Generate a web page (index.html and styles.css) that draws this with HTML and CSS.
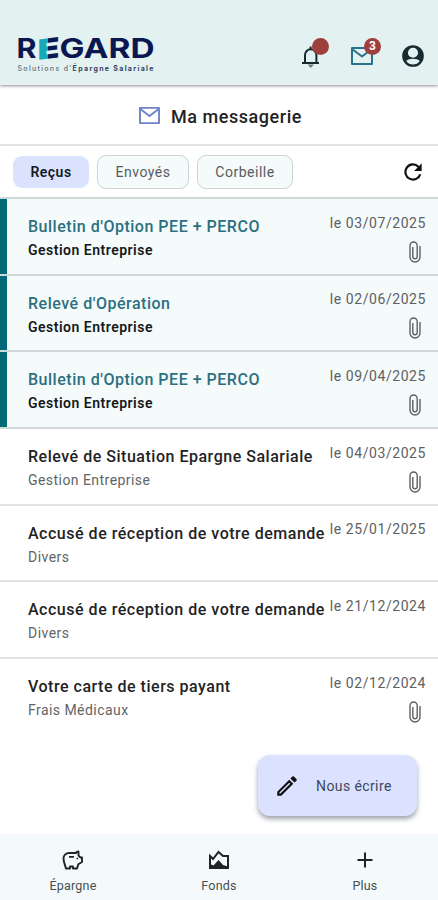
FILE: index.html
```html
<!DOCTYPE html>
<html lang="fr">
<head>
<meta charset="utf-8">
<title>Ma messagerie</title>
<link rel="stylesheet" href="styles.css">
</head>
<body>
<svg class="defs" width="0" height="0">
  <symbol id="mail-thin" viewBox="0 0 24 20"><path d="M2 2h20v16H2zM2 3l10 7.500L22 3" fill="none" stroke="currentColor" stroke-width="2" stroke-linejoin="round"/></symbol>
  <symbol id="clip" viewBox="0 0 12 22"><path d="M11 5v11a5 5 0 0 1-10 0V4.600a3.600 3.600 0 0 1 7.200 0v11a2.200 2.200 0 0 1-4.400 0V6" fill="none" stroke="currentColor" stroke-width="1.400"/></symbol>
</svg>
<div class="app">
  <header class="top">
    <svg class="logo" width="140" height="48" viewBox="0 -8 140 48">
      <defs><linearGradient id="flag"><stop offset="0.500" stop-color="#18a9b8"/><stop offset="0.500" stop-color="#0b1750"/></linearGradient></defs>
      <g class="brand">
        <text x="-0.500" y="22" textLength="20" lengthAdjust="spacingAndGlyphs">R</text>
        <text class="brand-e" transform="translate(20.500 24) skewY(-7)" x="0" y="0" textLength="22" lengthAdjust="spacingAndGlyphs" fill="url(#flag)">E</text>
        <text x="42.500" y="22" textLength="95" lengthAdjust="spacingAndGlyphs">GARD</text>
      </g>
      <text class="tagline" x="0.500" y="35" textLength="136">Solutions d’<tspan class="strong">Épargne Salariale</tspan></text>
    </svg>
    <div class="actions">
      <div class="action bell">
        <svg width="22" height="25" viewBox="0 0 22 25"><path d="M2 19h17M5 19V11a5.700 5.700 0 0 1 11.400 0v8M10.600 5V2.500" fill="none" stroke="#17282d" stroke-width="2"/><path d="M7.500 20.500h6.500l-3.200 3.500z" fill="#707b7d"/></svg>
        <span class="badge"></span>
      </div>
      <div class="action inbox">
        <svg width="24" height="20"><use href="#mail-thin"/></svg>
        <span class="badge">3</span>
      </div>
      <svg class="user" width="26" height="26" viewBox="0 0 24 24"><path fill-rule="evenodd" d="M12 2a10 10 0 1 0 0 20 10 10 0 0 0 0-20zm0 2.300a4.700 4.700 0 1 1 0 9.400 4.700 4.700 0 0 1 0-9.400zM5.800 16.500c2.200-2.500 10.200-2.500 12.400 0C15.500 20.900 8.500 20.900 5.800 16.500z"/></svg>
    </div>
  </header>
  <div class="heading"><svg width="23" height="19"><use href="#mail-thin"/></svg><h1>Ma messagerie</h1></div>
  <nav class="tabs">
    <span class="tab active">Reçus</span><span class="tab">Envoyés</span><span class="tab">Corbeille</span>
    <svg class="refresh" width="26" height="26" viewBox="0 0 24 24"><path d="M17.650 6.350A8 8 0 1 0 19.730 14h-2.080A6 6 0 1 1 12 6c1.660 0 3.140.69 4.220 1.780L13 11h7V4l-2.350 2.350z"/></svg>
  </nav>
  <main class="list">
    <article class="msg unread"><div class="text"><h2>Bulletin d'Option PEE + PERCO</h2><p>Gestion Entreprise</p></div><div class="meta"><time>le 03/07/2025</time><svg><use href="#clip"/></svg></div></article>
    <article class="msg unread"><div class="text"><h2>Relevé d'Opération</h2><p>Gestion Entreprise</p></div><div class="meta"><time>le 02/06/2025</time><svg><use href="#clip"/></svg></div></article>
    <article class="msg unread"><div class="text"><h2>Bulletin d'Option PEE + PERCO</h2><p>Gestion Entreprise</p></div><div class="meta"><time>le 09/04/2025</time><svg><use href="#clip"/></svg></div></article>
    <article class="msg"><div class="text"><h2>Relevé de Situation Epargne Salariale</h2><p>Gestion Entreprise</p></div><div class="meta"><time>le 04/03/2025</time><svg><use href="#clip"/></svg></div></article>
    <article class="msg"><div class="text"><h2>Accusé de réception de votre demande</h2><p>Divers</p></div><div class="meta"><time>le 25/01/2025</time></div></article>
    <article class="msg"><div class="text"><h2>Accusé de réception de votre demande</h2><p>Divers</p></div><div class="meta"><time>le 21/12/2024</time></div></article>
    <article class="msg"><div class="text"><h2>Votre carte de tiers payant</h2><p>Frais Médicaux</p></div><div class="meta"><time>le 02/12/2024</time><svg><use href="#clip"/></svg></div></article>
  </main>
  <button class="compose"><svg width="26" height="26" viewBox="0 0 24 24"><path d="M14.060 9.020l.92.92L5.920 19H5v-.92l9.060-9.060M17.660 3c-.25 0-.51.1-.7.290l-1.830 1.830 3.750 3.750 1.830-1.830a1 1 0 0 0 0-1.410l-2.340-2.340c-.2-.2-.45-.29-.71-.290zm-3.600 3.190L3 17.250V21h3.750L17.810 9.940l-3.750-3.750z"/></svg><span>Nous écrire</span></button>
  <footer class="bottom">
    <div class="item"><svg width="24" height="24" viewBox="0 0 24 24"><path d="M15 5H8.500A5.500 5.500 0 0 0 2.500 10.500C2.500 13.500 4 17 5 20.500H9v-2h3v2h4l1.300-4.200L21 14V9.500H19.500L17.500 7.500V3.500c-1 0-2.500.7-2.500 1.500z" fill="none" stroke="currentColor" stroke-width="1.900" stroke-linejoin="round"/><path d="M8 8h5v1.800H8zM15.500 9.700h1.600v1.600h-1.600z"/></svg><span>Épargne</span></div>
    <div class="item"><svg width="24" height="24" viewBox="0 0 24 24"><path d="M3 8l3 3 5.500-7L16 8h5v12H3z" fill="none" stroke="currentColor" stroke-width="2"/><path d="M3 16l3.500 1.500 5-5.500 4.500 5 5 1.500V20H3z"/></svg><span>Fonds</span></div>
    <div class="item"><svg width="24" height="24" viewBox="0 0 24 24"><path d="M19.500 13H13v6.500h-2V13H4.500v-2H11V4.500h2V11h6.500v2z"/></svg><span>Plus</span></div>
  </footer>
</div>
</body>
</html>
```
FILE: styles.css
```css
* { box-sizing: border-box; }
body { margin: 0; background: #fff; font-family: Roboto, sans-serif; color: #171b1c; }
h1, h2, p { margin: 0; }
svg { fill: currentColor; flex: none; }
.defs { position: absolute; }
.app { position: relative; width: 438px; height: 900px; display: flex; flex-direction: column; overflow: hidden; }
.top { height: 85px; flex: none; background: #e3f1f1; display: flex; align-items: flex-start; padding: 28px 12px 0 17px; box-shadow: 0 1px 3px #8f8c94; }
.logo { flex: none; overflow: visible; }
.brand { font: 700 27px Inter, sans-serif; fill: #0b1750; }
.brand-e { font-weight: 900; font-size: 28px; }
.tagline { font: 500 7px Inter, sans-serif; fill: #5f7180; }
.tagline .strong { font-weight: 700; fill: #334260; }
.actions { display: flex; align-items: center; margin: 8px 0 0 auto; height: 40px; }
.action { position: relative; display: flex; }
.bell { width: 50px; }
.inbox { width: 50px; color: #26738a; }
.user { color: #172b30; }
.badge { position: absolute; left: 12px; top: -6px; width: 17px; height: 17px; border-radius: 50%; background: #9d3f3d; color: #fff; font: 700 12px/17px Roboto, sans-serif; text-align: center; }
.inbox .badge { left: 14px; top: -8px; }
.heading { height: 61px; flex: none; display: flex; align-items: center; padding: 1px 0 0 138px; gap: 10px; border-bottom: 2px solid #e0e4e5; color: #6f83c8; }
h1 { font-size: 18px; font-weight: 500; letter-spacing: .55px; color: #1f2324; padding-top: 3px; }
.tabs { height: 53px; flex: none; display: flex; align-items: center; gap: 8px; padding: 0 12px 0 13px; border-bottom: 2px solid #d0d9da; }
.tab { height: 34px; border: 1.500px solid #ccd3d4; border-radius: 9px; background: #f5fafb; color: #555c5e; font-size: 14px; letter-spacing: .5px; display: flex; align-items: center; justify-content: center; width: 92px; }
.tab:nth-child(3) { width: 96px; }
.tab.active { width: 76px; height: 32px; border: 0; background: #dbe2fe; color: #15191f; font-weight: 600; }
.refresh { margin-left: auto; color: #111; }
.msg { height: 76.700px; display: flex; justify-content: space-between; padding: 15px 12px 0 28px; border-bottom: 2px solid #dfe3e4; }
.msg:last-child { border: 0; }
.unread { background: #f5fafb; box-shadow: inset 7px 0 #006a78; border-color: #d0d9da; }
.text { white-space: nowrap; }
h2 { font-size: 16px; line-height: 25px; font-weight: 500; letter-spacing: .515px; color: #1f2324; }
.unread h2 { color: #2b7080; }
.msg p { font-size: 14px; line-height: 23px; letter-spacing: .45px; color: #606466; }
.unread .text p { font-weight: 600; letter-spacing: .5px; color: #15191a; }
.meta { display: flex; flex-direction: column; align-items: flex-end; color: #5d6163; }
time { font-size: 14px; line-height: 17px; letter-spacing: .57px; white-space: nowrap; padding-top: 0.500px; }
.meta svg { width: 12px; height: 22px; margin: 9px 5px 0 0; }
.compose { position: absolute; left: 258px; top: 755px; width: 159px; height: 61px; border: 0; border-radius: 12px; background: #dae2ff; box-shadow: 0 3px 5px #9da2aa; display: flex; align-items: center; padding: 0 0 0 16px; gap: 16px; font: 400 14px Roboto, sans-serif; letter-spacing: .4px; color: #3f465b; }
.compose svg { color: #111; }
.bottom { margin-top: auto; height: 66px; flex: none; background: #f4fafb; display: grid; grid-template-columns: repeat(3, 1fr); }
.item { display: flex; flex-direction: column; align-items: center; padding-top: 14px; font-size: 12.500px; line-height: 15px; gap: 6px; letter-spacing: .2px; color: #1c2527; }
.item span { color: #484e50; }
```
